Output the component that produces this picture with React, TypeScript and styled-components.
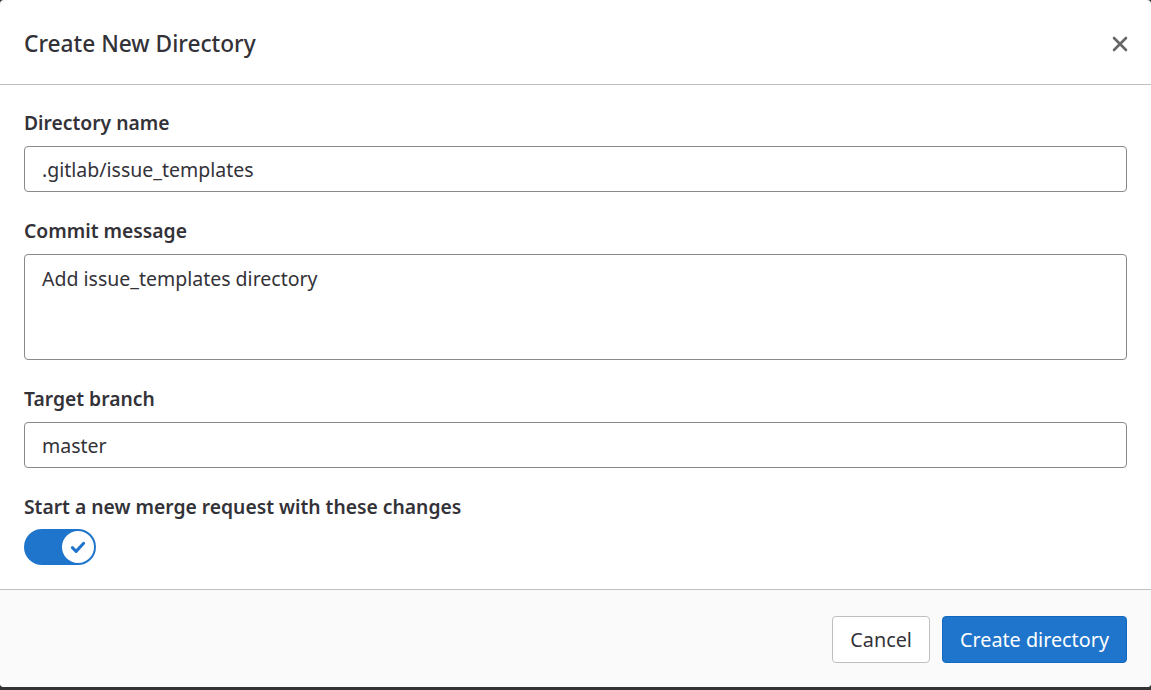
import React from "react";
import styled, { createGlobalStyle } from "styled-components";

const Global = createGlobalStyle`
  html, body { margin: 0; padding: 0; background: #333333; }
  body { font-family: "Noto Sans", "Open Sans", sans-serif; color: #333238; }
  * { box-sizing: border-box; }
`;

const Modal = styled.div`
  width: 1151px;
  height: 687px;
  background: #ffffff;
  border-radius: 4px;
  display: flex;
  flex-direction: column;
  overflow: hidden;
`;

const Header = styled.div`
  height: 85px;
  flex-shrink: 0;
  display: flex;
  align-items: center;
  justify-content: space-between;
  padding: 3px 21px 0 24px;
  border-bottom: 1px solid #bfbfbf;
`;

const Title = styled.h2`
  margin: 0;
  font-size: 22.7px;
  line-height: 30px;
  font-weight: 500;
  color: #333238;
`;

const CloseButton = styled.button`
  border: none;
  background: transparent;
  padding: 0;
  width: 20px;
  height: 20px;
  display: flex;
  align-items: center;
  justify-content: center;
  cursor: pointer;
`;

const Body = styled.div`
  flex: 1;
  min-height: 0;
  padding: 26px 24px 0 24px;
  display: flex;
  flex-direction: column;
  gap: 27px;
`;

const Group = styled.div<{ $tight?: boolean }>`
  display: flex;
  flex-direction: column;
  gap: ${(p) => (p.$tight ? "10px" : "11px")};
`;

const Label = styled.label`
  font-size: 19.3px;
  line-height: 24px;
  font-weight: 600;
  color: #333238;
`;

const Input = styled.input`
  height: 46px;
  width: 100%;
  border: 1px solid #89888d;
  border-radius: 4px;
  padding: 0 17px;
  font-family: inherit;
  font-size: 19.5px;
  color: #333238;
  background: #fff;
  outline: none;
`;

const TextArea = styled.textarea`
  height: 106px;
  width: 100%;
  border: 1px solid #89888d;
  border-radius: 4px;
  padding: 11px 17px;
  font-family: inherit;
  font-size: 19.5px;
  line-height: 26px;
  color: #333238;
  background: #fff;
  resize: none;
  outline: none;
`;

const Toggle = styled.div`
  width: 72px;
  height: 36px;
  border-radius: 18px;
  background: #1f75cb;
  display: flex;
  align-items: center;
  justify-content: flex-end;
  padding-right: 2px;
`;

const Knob = styled.div`
  width: 32px;
  height: 32px;
  border-radius: 50%;
  background: #fff;
  display: flex;
  align-items: center;
  justify-content: center;
`;

const Footer = styled.div`
  height: 98px;
  flex-shrink: 0;
  background: #fafafa;
  border-top: 1px solid #bfbfbf;
  display: flex;
  justify-content: flex-end;
  align-items: flex-start;
  gap: 12px;
  padding: 26px 24px 0 24px;
`;

const Button = styled.button<{ $primary?: boolean }>`
  height: 47px;
  padding: 0 17px;
  border-radius: 4px;
  font-family: inherit;
  font-size: 19.8px;
  cursor: pointer;
  border: 1px solid ${(p) => (p.$primary ? "#1068bf" : "#bfbfbf")};
  background: ${(p) => (p.$primary ? "#1f75cb" : "#ffffff")};
  color: ${(p) => (p.$primary ? "#ffffff" : "#333238")};
`;

export default function App() {
  return (
    <>
      <Global />
      <Modal>
        <Header>
          <Title>Create New Directory</Title>
          <CloseButton aria-label="Close">
            <svg width="16" height="16" viewBox="0 0 16 16">
              <path d="M2 2 L14 14 M14 2 L2 14" stroke="#666666" strokeWidth="2.6" strokeLinecap="round" />
            </svg>
          </CloseButton>
        </Header>
        <Body>
          <Group>
            <Label>Directory name</Label>
            <Input defaultValue=".gitlab/issue_templates" />
          </Group>
          <Group>
            <Label>Commit message</Label>
            <TextArea defaultValue="Add issue_templates directory" />
          </Group>
          <Group>
            <Label>Target branch</Label>
            <Input defaultValue="master" />
          </Group>
          <Group $tight>
            <Label>Start a new merge request with these changes</Label>
            <Toggle>
              <Knob>
                <svg width="20" height="20" viewBox="0 0 16 16">
                  <path d="M3.5 8.5 L6.5 11.5 L12.5 5" fill="none" stroke="#1f75cb" strokeWidth="2.4" strokeLinecap="round" strokeLinejoin="round" />
                </svg>
              </Knob>
            </Toggle>
          </Group>
        </Body>
        <Footer>
          <Button>Cancel</Button>
          <Button $primary>Create directory</Button>
        </Footer>
      </Modal>
    </>
  );
}
